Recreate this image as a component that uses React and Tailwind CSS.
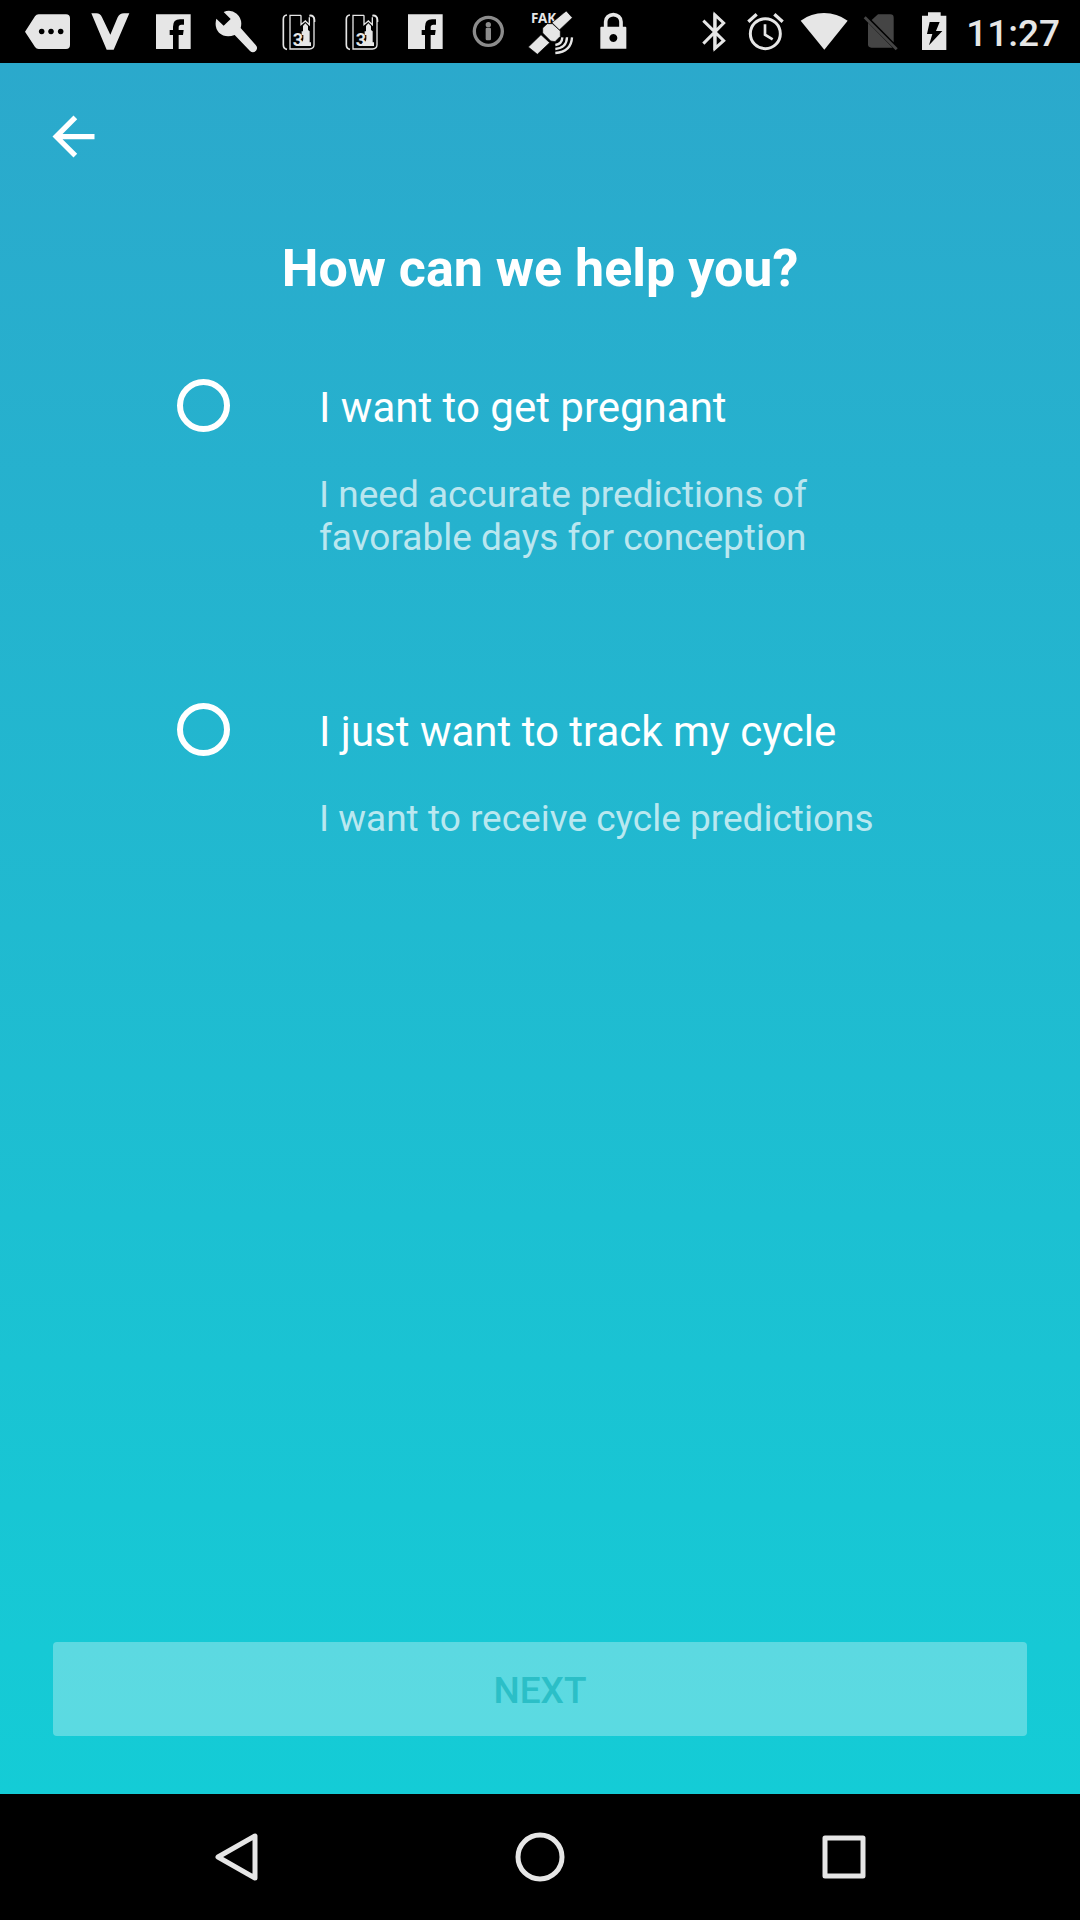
import React from "react";

const ink = "#e6e6e6";

function StatusIcon({ viewBox, className = "w-[63px]", children }) {
  return (
    <svg viewBox={viewBox} className={`h-[63px] shrink-0 ${className}`} fill={ink} aria-hidden="true">
      {children}
    </svg>
  );
}

const bookShapes = (
  <>
    <path d="M51 45 Q40 46 40 58 V134 Q40 146 51 148" fill="none" stroke={ink} strokeWidth="5" />
    <path
      d="M93 46 H60 V147 H118 Q132 146 132 134 V66 M93 46 V74 L106 63 L118 74 V52"
      fill="none"
      stroke={ink}
      strokeWidth="4"
    />
    <path d="M118 47 Q133 45 133 60 V66" fill="none" stroke={ink} strokeWidth="6" />
    <path d="M99 78 L106 70 L114 78 V90 L119 94 V127 H123 V138 H88 V130 Q100 126 100 116 V105 H95 V94 H99 Z" />
    <text x="68" y="137" fontSize="54" fontWeight="700" className="font-['Roboto',sans-serif]">
      3
    </text>
  </>
);

const facebookShape = (
  <path
    fillRule="evenodd"
    d="M468 43 H572 V147 H536 V105 H549 L551 90 H536 V82 Q536 74 544 74 H552 V58 H540 Q519 58 519 80 V90 H509 V105 H519 V147 H468 Z"
  />
);

function StatusBar() {
  return (
    <header className="flex h-[63px] items-center justify-between bg-black pl-4 pr-5">
      <div className="flex">
        <StatusIcon viewBox="48 0 189 189">
          <path
            fillRule="evenodd"
            d="M116 43 H198 Q210 43 210 55 V135 Q210 147 198 147 H116 Q109 147 105 141 L75 95 L105 49 Q109 43 116 43 Z M125 86 a8.500 8.500 0 1 0 .1 0 Z M153 86 a8.500 8.500 0 1 0 .1 0 Z M182 86 a8.500 8.500 0 1 0 .1 0 Z"
          />
        </StatusIcon>
        <StatusIcon viewBox="237 0 189 189">
          <path d="M274 40 H289 Q301 40 306 52 L331 104 L353 52 Q359 40 372 40 H388 L341 149 H320 Z" />
        </StatusIcon>
        <StatusIcon viewBox="426 0 189 189">{facebookShape}</StatusIcon>
        <StatusIcon viewBox="615 0 189 189">
          <path d="M671 36 Q692 27 710 41 Q729 58 722 84 L767 135 Q775 144 768 152 Q759 161 750 153 L704 105 Q676 115 657 98 Q642 82 649 56 L671 77 L692 57 Z" />
        </StatusIcon>
        <StatusIcon viewBox="-6 0 189 189">{bookShapes}</StatusIcon>
        <StatusIcon viewBox="-6 0 189 189">{bookShapes}</StatusIcon>
        <StatusIcon viewBox="426 0 189 189">{facebookShape}</StatusIcon>
        <StatusIcon viewBox="-9 0 189 189">
          <circle cx="85" cy="94" r="42" fill="none" stroke="#8c8c8c" strokeWidth="10" />
          <circle cx="85" cy="74" r="8" fill="#8c8c8c" />
          <rect x="77" y="83" width="16" height="38" rx="4" fill="#8c8c8c" />
        </StatusIcon>
        <StatusIcon viewBox="180 0 189 189">
          <text x="213" y="69" fontSize="40" fontWeight="700" className="font-['Noto_Sans',sans-serif]">
            FAK
          </text>
          <g stroke="#000" strokeWidth="2">
            <path d="M276 68 L311 39 L319 33 L337 53 L298 90 Z" />
            <path d="M205 141 L243 104 L269 128 L232 163 Z" />
            <path d="M248 84 L262 71 H277 L301 93 V109 L285 125 L272 123 L248 99 Z" />
          </g>
          <path
            d="M286 135 Q306 132 307 112 M286 147 Q320 144 321 112 M286 159 Q334 155 336 112"
            fill="none"
            stroke={ink}
            strokeWidth="7"
          />
        </StatusIcon>
        <StatusIcon viewBox="369 0 189 189">
          <path
            d="M437 84 V65 A23 21 0 0 1 483 65 V84"
            fill="none"
            stroke={ink}
            strokeWidth="11"
          />
          <path fillRule="evenodd" d="M424 80 H496 Q499 80 499 83 V146 H421 V83 Q421 80 424 80 Z M460 102 a12 12 0 1 0 .1 0 Z" />
        </StatusIcon>
      </div>
      <div className="flex items-center">
        <StatusIcon viewBox="24 0 156 189" className="w-[52px]">
          <path
            d="M70 62 L131 122 L105 145 V45 L131 69 L70 131"
            fill="none"
            stroke={ink}
            strokeWidth="9"
          />
          <path d="M100 39 L109 44 V146 L100 151 Z" />
        </StatusIcon>
        <StatusIcon viewBox="180 0 150 189" className="w-[50px]">
          <g fill="none" stroke={ink}>
            <circle cx="256" cy="101" r="45" strokeWidth="9" />
            <path d="M255 73 V104 L278 118" strokeWidth="8" />
            <path d="M205 65 L230 43 M308 65 L283 43" strokeWidth="10" />
          </g>
        </StatusIcon>
        <StatusIcon viewBox="330 0 204 189" className="w-[68px]">
          <path d="M362 62 Q393 39 432 39 Q471 39 503 62 L433 149 Z" />
        </StatusIcon>
        <StatusIcon viewBox="534 0 132 189" className="w-[44px]">
          <g fill="#454545">
            <path d="M594 43 H631 Q641 43 641 53 V127 L575 60 Z" />
            <path d="M564 68 L638 143 H574 Q564 143 564 133 Z" />
            <path d="M551 55 L557 49 L653 145 L647 151 Z" />
          </g>
        </StatusIcon>
        <StatusIcon viewBox="666 0 192 189" className="w-[64px]">
          <path
            fillRule="evenodd"
            d="M744 37 H782 V47 H799 V150 H726 V47 H744 Z M749 66 L741 102 H757 L747 136 L787 93 H768 L779 66 Z"
          />
        </StatusIcon>
        <time className="pt-1 text-[37px] leading-[59px] font-medium text-[#e6e6e6]">11:27</time>
      </div>
    </header>
  );
}

const options = [
  {
    id: "pregnant",
    title: "I want to get pregnant",
    detail: "I need accurate predictions of favorable days for conception",
  },
  {
    id: "track",
    title: "I just want to track my cycle",
    detail: "I want to receive cycle predictions",
  },
];

function Option({ id, title, detail }) {
  return (
    <div className="flex items-start gap-[89px]">
      <input
        type="radio"
        name="goal"
        id={id}
        aria-describedby={`${id}-detail`}
        className="size-[53px] shrink-0 appearance-none rounded-full border-6 border-white checked:bg-white/50"
      />
      <div>
        <label htmlFor={id} className="block text-[42px] leading-[58px] text-white">
          {title}
        </label>
        <p id={`${id}-detail`} className="mt-9 text-[37px] leading-[43px] text-white/70">
          {detail}
        </p>
      </div>
    </div>
  );
}

function NavBar() {
  return (
    <nav className="grid h-[126px] grid-cols-3 bg-black px-[84px]" aria-label="System">
      <button type="button" aria-label="Back" className="flex items-center justify-center">
        <svg viewBox="0 0 54 54" className="size-[54px]" fill="none" stroke={ink} strokeWidth="5" strokeLinejoin="round">
          <path d="M46 6 V48 L9 27 Z" />
        </svg>
      </button>
      <button type="button" aria-label="Home" className="flex items-center justify-center">
        <svg viewBox="0 0 54 54" className="size-[54px]" fill="none" stroke={ink} strokeWidth="5">
          <circle cx="27" cy="27" r="22" />
        </svg>
      </button>
      <button type="button" aria-label="Recent apps" className="flex items-center justify-center">
        <svg viewBox="0 0 54 54" className="size-[54px]" fill="none" stroke={ink} strokeWidth="5" strokeLinejoin="round">
          <rect x="8" y="8" width="38" height="38" />
        </svg>
      </button>
    </nav>
  );
}

export default function App() {
  return (
    <div className="flex min-h-screen flex-col bg-black font-['Roboto',sans-serif]">
      <StatusBar />
      <main className="flex flex-1 flex-col bg-linear-to-b/srgb from-[#2ba9cc] via-[#20bad0] to-[#14ccd6] pb-[58px] pt-[42px]">
        <button type="button" aria-label="Go back" className="ml-[42px] size-[63px]">
          <svg viewBox="0 0 24 24" className="size-full" fill="white">
            <path d="M20 11H7.830l5.590-5.590L12 4l-8 8 8 8 1.410-1.410L7.830 13H20v-2z" />
          </svg>
        </button>
        <h1 id="goal-heading" className="mt-[69px] text-center text-[52px] leading-[64px] font-bold text-white">
          How can we help you?
        </h1>
        <form className="mt-[78px] flex flex-1 flex-col">
          <div role="radiogroup" aria-labelledby="goal-heading" className="flex flex-col gap-36 px-[177px]">
            {options.map((option) => (
              <Option key={option.id} {...option} />
            ))}
          </div>
          <button
            type="submit"
            disabled
            className="mx-[53px] mt-auto h-[94px] rounded-sm bg-white/30 pt-1 text-[37px] font-medium text-[#2bbfc7]"
          >
            NEXT
          </button>
        </form>
      </main>
      <NavBar />
    </div>
  );
}
